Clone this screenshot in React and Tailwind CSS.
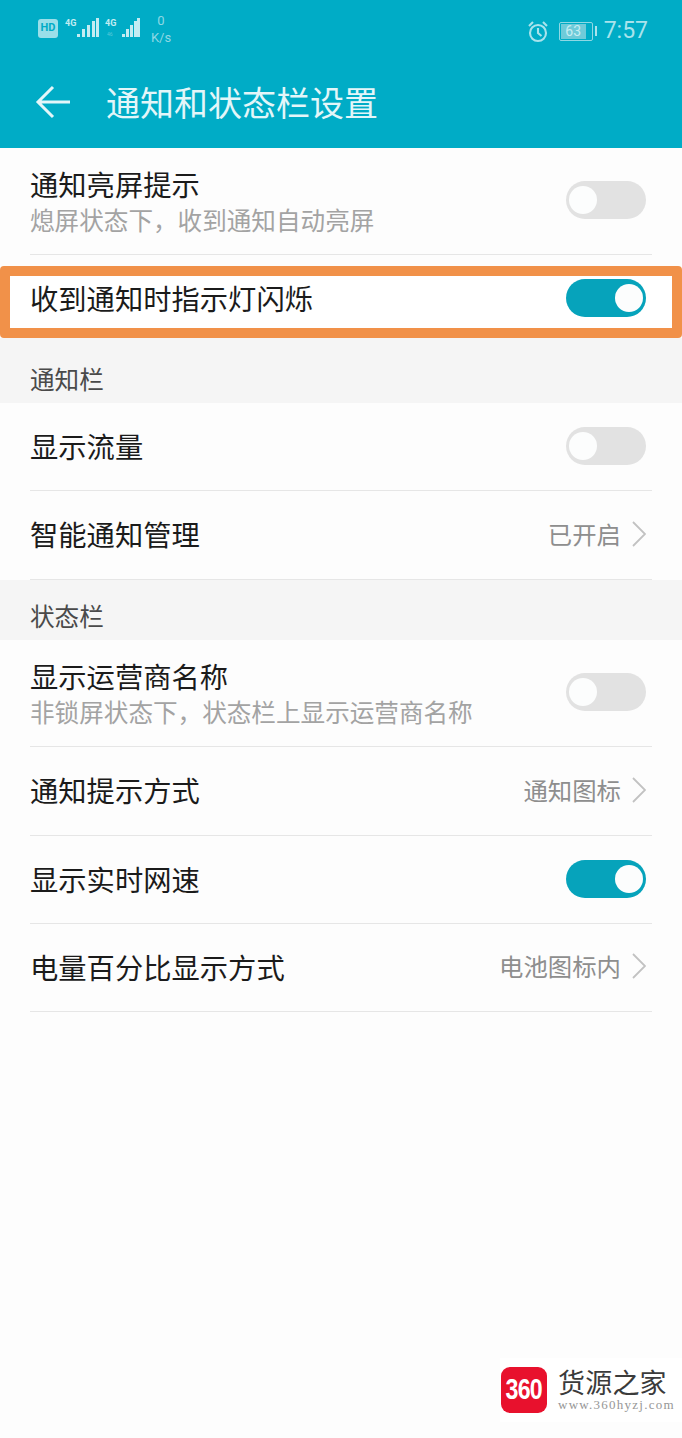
import React from 'react';

const CJK = "font-['Noto_Sans_CJK_SC','Noto_Sans',sans-serif]";

const Toggle = ({ on }) => (
  <div className={`flex h-[38px] w-[80px] shrink-0 items-center rounded-full ${on ? 'justify-end bg-[#06a3bb]' : 'justify-start bg-[#e2e2e2]'} px-[2px]`}>
    <div className="mx-[1px] h-[28px] w-[28px] rounded-full bg-[#fcfdfd]" />
  </div>
);

const Title = ({ children }) => (
  <div className="text-[28.3px] leading-[36px] text-[#1b1b1b]">{children}</div>
);

const Sub = ({ children }) => (
  <div className="mt-[1px] text-[24.6px] leading-[32px] text-[#a3a3a3]">{children}</div>
);

const Divider = () => <div className="mr-[30px] h-px bg-[#e6e6e6]" />;

const Chevron = () => (
  <svg width="14" height="26" viewBox="0 0 14 26" fill="none" stroke="#c2c2c2" strokeWidth="1.8">
    <path d="M1 1l12 12L1 25" />
  </svg>
);

// plain setting row: text on the left, toggle or link on the right
const Row = ({ height, title, sub, on, value }) => (
  <div className="pl-[30px]">
    <div className={`flex items-center justify-between ${height} pb-[2px] pr-[36px]`}>
      <div>
        <Title>{title}</Title>
        {sub && <Sub>{sub}</Sub>}
      </div>
      {value ? (
        <div className="flex items-center gap-[11px]">
          <span className="text-[24.4px] text-[#8e8e8e]">{value}</span>
          <Chevron />
        </div>
      ) : (
        <Toggle on={on} />
      )}
    </div>
    <Divider />
  </div>
);

const Section = ({ height, children }) => (
  <div className={`flex ${height} items-end bg-[#f5f5f5] px-[30px] pb-[6px] text-[24.6px] text-[#4a4a4a]`}>
    {children}
  </div>
);

const Signal = ({ small }) => (
  <svg width="35" height="24" viewBox="0 0 35 24" fill="#c4ecf2">
    <text x="0" y="9" fontSize="9" fontWeight="700" fontFamily="Roboto, sans-serif">4G</text>
    {small && <text x="2" y="19" fontSize="5" fontFamily="Roboto, sans-serif" opacity="0.45">46</text>}
    <rect x={small ? 17 : 12} y="17" width="3" height="3" />
    <rect x={small ? 21 : 17} y="12" width="3" height="8" />
    <rect x={small ? 25 : 22} y="8" width="3" height="12" />
    <rect x={small ? 29 : 27} y="4" width="3" height="16" />
    <rect x={small ? 32 : 31} y="1" width="3" height="19" />
  </svg>
);

const StatusBar = () => (
  <div className="flex h-[58px] items-start justify-between pl-[38px] pr-[34px] pt-[12px] text-[#9fe0ea]">
    <div className="flex items-start">
      <div className="mt-[7px] flex h-[19px] w-[20px] items-center justify-center rounded-[3px] bg-[#9adfe9] font-['Roboto',sans-serif] text-[11px] font-bold text-[#00acc6]">
        HD
      </div>
      <div className="ml-[7px] mt-[5px]"><Signal /></div>
      <div className="ml-[5px] mt-[5px]"><Signal small /></div>
      <div className="ml-[9px] w-[24px] text-center font-['Roboto',sans-serif] text-[13px] leading-[17px] text-[#8fd8e4]">
        <div>0</div>
        <div>K/s</div>
      </div>
    </div>
    <div className="flex items-center">
      <svg width="22" height="23" viewBox="0 0 22 23" fill="none" stroke="#a9e3ec" strokeWidth="2.1" className="mt-[6px]">
        <circle cx="11" cy="13" r="8" />
        <path d="M11 8v5l3.5 3M2 6l4-4M20 6l-4-4" />
      </svg>
      <div className="ml-[10px] mt-[6px] flex items-center">
        <div className="flex h-[19px] w-[34px] items-center rounded-[2px] border border-[#8fd8e4] p-px">
          <div className="flex h-full w-[25px] items-center justify-center bg-[#6fcbd9] font-['Roboto',sans-serif] text-[14px] text-[#c9eef3]">63</div>
        </div>
        <div className="ml-[2px] h-[10px] w-[2px] bg-[#a9e3ec]" />
      </div>
      <div className="ml-[7px] mt-[6px] font-['Roboto',sans-serif] text-[23px] leading-[26px] text-[#a9e3ec]">7:57</div>
    </div>
  </div>
);

const Watermark = () => (
  <div className="absolute bottom-[16px] right-0 flex h-[64px] w-[182px] items-center bg-white pl-[1px]">
    <div className="flex h-[46px] w-[46px] items-center justify-center rounded-[9px] bg-[#e8112d] font-['Liberation_Sans',sans-serif] text-white">
      <span className="scale-x-[0.8] text-[29px] font-bold tracking-[-1px]">360</span>
    </div>
    <div className="ml-[11px] pb-[2px]">
      <div className="text-[27px] leading-[32px] tracking-[0.2px] text-[#3b3b3b]">货源之家</div>
      <div className="font-['Liberation_Serif',serif] text-[13px] leading-[14px] tracking-[1.25px] text-[#969696]">www.360hyzj.com</div>
    </div>
  </div>
);

const App = () => (
  <div className={`relative h-[1438px] w-[682px] overflow-hidden bg-[#fdfdfd] ${CJK}`}>
    <div className="h-[148px] bg-[#00acc6]">
      <StatusBar />
      <div className="flex h-[90px] items-center pb-[2px] pl-[35px] text-[#e3f6f9]">
        <svg width="36" height="34" viewBox="0 0 36 34" fill="none" stroke="#e3f6f9" strokeWidth="3">
          <path d="M35 17H3M18 2L3 17l15 15" />
        </svg>
        <div className="ml-[35px] text-[34px] leading-[44px]">通知和状态栏设置</div>
      </div>
    </div>

    <Row height="h-[106px]" title="通知亮屏提示" sub="熄屏状态下，收到通知自动亮屏" on={false} />

    {/* orange highlight drawn on top of the screenshot */}
    <div className="mt-[11px] flex h-[72px] items-center justify-between rounded-[4px] border-[10px] border-[#f19149] bg-white pb-[8px] pl-[20px] pr-[26px]">
      <Title>收到通知时指示灯闪烁</Title>
      <Toggle on />
    </div>

    <Section height="h-[65px]">通知栏</Section>
    <Row height="h-[87px]" title="显示流量" on={false} />
    <Row height="h-[88px]" title="智能通知管理" value="已开启" />

    <Section height="h-[60px]">状态栏</Section>
    <Row height="h-[106px]" title="显示运营商名称" sub="非锁屏状态下，状态栏上显示运营商名称" on={false} />
    <Row height="h-[88px]" title="通知提示方式" value="通知图标" />
    <Row height="h-[87px]" title="显示实时网速" on />
    <Row height="h-[87px]" title="电量百分比显示方式" value="电池图标内" />

    <Watermark />
  </div>
);

export default App;
